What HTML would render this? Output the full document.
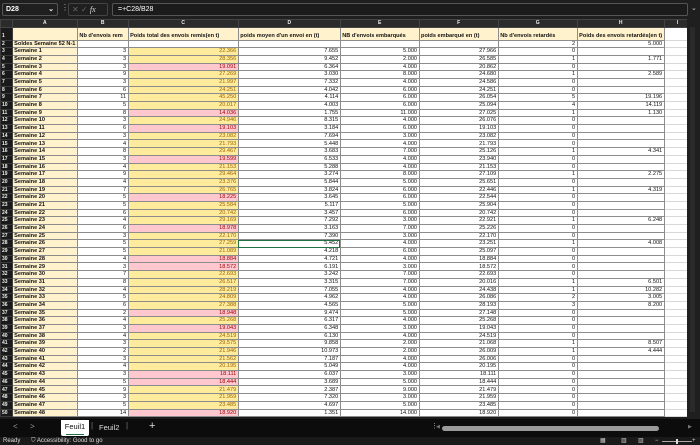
<!DOCTYPE html>
<html><head><meta charset="utf-8">
<style>
*{margin:0;padding:0;box-sizing:border-box}
body{width:700px;height:445px;overflow:hidden;background:#1c1c1c;font-family:"Liberation Sans",sans-serif;position:relative}
.fb{position:absolute;left:0;top:0;width:700px;height:19px;background:#1f1f1f}
.nb{position:absolute;left:2px;top:3px;width:56px;height:13px;border:1px solid #555;border-radius:2px;color:#fff;font-size:7px;line-height:11px;padding-left:3px;font-weight:bold}
.nb span{position:absolute;right:3px;top:0;font-size:7px}
.ic{position:absolute;left:68px;top:3px;width:40px;height:13px;border:1px solid #444;border-radius:2px;color:#666;font-size:8px;line-height:11px;padding-left:3px}
.fx{position:absolute;left:112px;top:3px;width:576px;height:13px;border:1px solid #555;border-radius:2px;color:#fff;font-size:7px;line-height:11px;padding-left:5px;background:#1b1b1b}
table{position:absolute;left:0;top:19px;border-collapse:collapse;table-layout:fixed;font-size:5.6px;color:#111}
td{height:7.7px;line-height:6.5px;padding:0 1.5px;white-space:nowrap;overflow:hidden;border:1px solid #8c8c8c;background:#fff;text-align:right}
tr.h td{height:7px;background:#2b2b2b;color:#eee;text-align:center;border:1px solid #444;font-weight:bold;font-size:5px}
td.n{background:#1a1a1a;color:#eee;border:1px solid #3a3a3a;text-align:left;font-weight:bold;font-size:5px;padding:0 1px}
td.a{background:#fff2cc;text-align:left;font-weight:bold}
td.y{background:#ffeb9c;color:#9c6500}
td.p{background:#ffc7ce;color:#9c0006}
td.e{border:1px solid #d8d8d8}
tr.r1 td{height:13px;vertical-align:bottom;text-align:left;font-weight:bold;background:#fff2cc}
tr.r1 td.n{background:#1a1a1a}
tr.r1 td.e{background:#fff}
.vs{position:absolute;left:687px;top:19px;width:13px;height:400px;background:#1f1f1f}
.tabs{position:absolute;left:0;top:419px;width:700px;height:18px;background:#0c0c0c;color:#ddd;font-size:8px}
.st{position:absolute;left:0;top:437px;width:700px;height:8px;background:#1a1a1a;color:#ddd;font-size:6px;line-height:8px}
</style></head><body>
<div class="fb">
<div class="nb">D28<span>⌄</span></div>
<div style="position:absolute;left:61px;top:3px;color:#aaa;font-size:8px">⋮</div>
<div class="ic">✕ ✓ <i style="color:#ddd;font-family:'Liberation Serif',serif">fx</i></div>
<div class="fx">=+C28/B28</div>
<div style="position:absolute;left:691px;top:4px;color:#ccc;font-size:7px">⌄</div>
</div>
<table>
<colgroup><col style="width:12px"><col style="width:57px"><col style="width:51px"><col style="width:112px"><col style="width:104px"><col style="width:80px"><col style="width:81px"><col style="width:81px"><col style="width:71px"><col style="width:29px"><col style="width:9px"></colgroup>
<tr class="h"><td></td><td>A</td><td>B</td><td>C</td><td>D</td><td>E</td><td>F</td><td>G</td><td>H</td><td>I</td><td></td></tr>
<tr class="r1"><td class="n">1</td><td></td><td>Nb d'envois rem</td><td>Poids total des envois remis(en t)</td><td>poids moyen d'un envoi en (t)</td><td>NB d'envois embarqués</td><td>poids embarqué en (t)</td><td>Nb d'envois retardés</td><td>Poids des envois retardés(en t)</td><td class="e"></td><td class="e"></td></tr>
<tr><td class="n">2</td><td class="a" style="overflow:visible">Soldes Semaine 52 N-1</td><td></td><td></td><td></td><td></td><td></td><td>2</td><td>5.000</td><td class="e"></td><td class="e"></td></tr>
<tr><td class="n">3</td><td class="a">Semaine 1</td><td>3</td><td class="y">22.366</td><td>7.655</td><td>5.000</td><td>27.966</td><td>0</td><td></td><td class="e"></td><td class="e"></td></tr>
<tr><td class="n">4</td><td class="a">Semaine 2</td><td>3</td><td class="y">28.356</td><td>9.452</td><td>2.000</td><td>26.585</td><td>1</td><td>1.771</td><td class="e"></td><td class="e"></td></tr>
<tr><td class="n">5</td><td class="a">Semaine 3</td><td>3</td><td class="p">19.091</td><td>6.364</td><td>4.000</td><td>20.862</td><td>0</td><td></td><td class="e"></td><td class="e"></td></tr>
<tr><td class="n">6</td><td class="a">Semaine 4</td><td>9</td><td class="y">27.269</td><td>3.030</td><td>8.000</td><td>24.680</td><td>1</td><td>2.589</td><td class="e"></td><td class="e"></td></tr>
<tr><td class="n">7</td><td class="a">Semaine 5</td><td>3</td><td class="y">21.997</td><td>7.332</td><td>4.000</td><td>24.586</td><td>0</td><td></td><td class="e"></td><td class="e"></td></tr>
<tr><td class="n">8</td><td class="a">Semaine 6</td><td>6</td><td class="y">24.251</td><td>4.042</td><td>6.000</td><td>24.251</td><td>0</td><td></td><td class="e"></td><td class="e"></td></tr>
<tr><td class="n">9</td><td class="a">Semaine 7</td><td>11</td><td class="y">45.250</td><td>4.114</td><td>6.000</td><td>26.054</td><td>5</td><td>19.196</td><td class="e"></td><td class="e"></td></tr>
<tr><td class="n">10</td><td class="a">Semaine 8</td><td>5</td><td class="y">20.017</td><td>4.003</td><td>6.000</td><td>25.094</td><td>4</td><td>14.119</td><td class="e"></td><td class="e"></td></tr>
<tr><td class="n">11</td><td class="a">Semaine 9</td><td>8</td><td class="p">14.036</td><td>1.755</td><td>11.000</td><td>27.025</td><td>1</td><td>1.130</td><td class="e"></td><td class="e"></td></tr>
<tr><td class="n">12</td><td class="a">Semaine 10</td><td>3</td><td class="y">24.946</td><td>8.315</td><td>4.000</td><td>26.076</td><td>0</td><td></td><td class="e"></td><td class="e"></td></tr>
<tr><td class="n">13</td><td class="a">Semaine 11</td><td>6</td><td class="p">19.103</td><td>3.184</td><td>6.000</td><td>19.103</td><td>0</td><td></td><td class="e"></td><td class="e"></td></tr>
<tr><td class="n">14</td><td class="a">Semaine 12</td><td>3</td><td class="y">23.082</td><td>7.694</td><td>3.000</td><td>23.082</td><td>0</td><td></td><td class="e"></td><td class="e"></td></tr>
<tr><td class="n">15</td><td class="a">Semaine 13</td><td>4</td><td class="y">21.793</td><td>5.448</td><td>4.000</td><td>21.793</td><td>0</td><td></td><td class="e"></td><td class="e"></td></tr>
<tr><td class="n">16</td><td class="a">Semaine 14</td><td>8</td><td class="y">29.467</td><td>3.683</td><td>7.000</td><td>25.126</td><td>1</td><td>4.341</td><td class="e"></td><td class="e"></td></tr>
<tr><td class="n">17</td><td class="a">Semaine 15</td><td>3</td><td class="p">19.599</td><td>6.533</td><td>4.000</td><td>23.940</td><td>0</td><td></td><td class="e"></td><td class="e"></td></tr>
<tr><td class="n">18</td><td class="a">Semaine 16</td><td>4</td><td class="y">21.153</td><td>5.288</td><td>4.000</td><td>21.153</td><td>0</td><td></td><td class="e"></td><td class="e"></td></tr>
<tr><td class="n">19</td><td class="a">Semaine 17</td><td>9</td><td class="y">29.464</td><td>3.274</td><td>8.000</td><td>27.109</td><td>1</td><td>2.275</td><td class="e"></td><td class="e"></td></tr>
<tr><td class="n">20</td><td class="a">Semaine 18</td><td>4</td><td class="y">23.376</td><td>5.844</td><td>5.000</td><td>25.651</td><td>0</td><td></td><td class="e"></td><td class="e"></td></tr>
<tr><td class="n">21</td><td class="a">Semaine 19</td><td>7</td><td class="y">26.765</td><td>3.824</td><td>6.000</td><td>22.446</td><td>1</td><td>4.319</td><td class="e"></td><td class="e"></td></tr>
<tr><td class="n">22</td><td class="a">Semaine 20</td><td>5</td><td class="p">18.225</td><td>3.645</td><td>6.000</td><td>22.544</td><td>0</td><td></td><td class="e"></td><td class="e"></td></tr>
<tr><td class="n">23</td><td class="a">Semaine 21</td><td>5</td><td class="y">25.584</td><td>5.117</td><td>5.000</td><td>25.904</td><td>0</td><td></td><td class="e"></td><td class="e"></td></tr>
<tr><td class="n">24</td><td class="a">Semaine 22</td><td>6</td><td class="y">20.742</td><td>3.457</td><td>6.000</td><td>20.742</td><td>0</td><td></td><td class="e"></td><td class="e"></td></tr>
<tr><td class="n">25</td><td class="a">Semaine 23</td><td>4</td><td class="y">29.169</td><td>7.292</td><td>3.000</td><td>22.921</td><td>1</td><td>6.248</td><td class="e"></td><td class="e"></td></tr>
<tr><td class="n">26</td><td class="a">Semaine 24</td><td>6</td><td class="p">18.978</td><td>3.163</td><td>7.000</td><td>25.226</td><td>0</td><td></td><td class="e"></td><td class="e"></td></tr>
<tr><td class="n">27</td><td class="a">Semaine 25</td><td>3</td><td class="y">22.170</td><td>7.390</td><td>3.000</td><td>22.170</td><td>0</td><td></td><td class="e"></td><td class="e"></td></tr>
<tr><td class="n">28</td><td class="a">Semaine 26</td><td>5</td><td class="y">27.259</td><td style="outline:1.5px solid #217346;outline-offset:-1px">5.452</td><td>4.000</td><td>23.251</td><td>1</td><td>4.008</td><td class="e"></td><td class="e"></td></tr>
<tr><td class="n">29</td><td class="a">Semaine 27</td><td>5</td><td class="y">21.089</td><td>4.218</td><td>6.000</td><td>25.097</td><td>0</td><td></td><td class="e"></td><td class="e"></td></tr>
<tr><td class="n">30</td><td class="a">Semaine 28</td><td>4</td><td class="p">18.884</td><td>4.721</td><td>4.000</td><td>18.884</td><td>0</td><td></td><td class="e"></td><td class="e"></td></tr>
<tr><td class="n">31</td><td class="a">Semaine 29</td><td>3</td><td class="p">18.572</td><td>6.191</td><td>3.000</td><td>18.572</td><td>0</td><td></td><td class="e"></td><td class="e"></td></tr>
<tr><td class="n">32</td><td class="a">Semaine 30</td><td>7</td><td class="y">22.693</td><td>3.242</td><td>7.000</td><td>22.693</td><td>0</td><td></td><td class="e"></td><td class="e"></td></tr>
<tr><td class="n">33</td><td class="a">Semaine 31</td><td>8</td><td class="y">26.517</td><td>3.315</td><td>7.000</td><td>20.016</td><td>1</td><td>6.501</td><td class="e"></td><td class="e"></td></tr>
<tr><td class="n">34</td><td class="a">Semaine 32</td><td>4</td><td class="y">28.219</td><td>7.055</td><td>4.000</td><td>24.438</td><td>1</td><td>10.282</td><td class="e"></td><td class="e"></td></tr>
<tr><td class="n">35</td><td class="a">Semaine 33</td><td>5</td><td class="y">24.809</td><td>4.962</td><td>4.000</td><td>26.086</td><td>2</td><td>3.005</td><td class="e"></td><td class="e"></td></tr>
<tr><td class="n">36</td><td class="a">Semaine 34</td><td>6</td><td class="y">27.388</td><td>4.565</td><td>5.000</td><td>28.193</td><td>3</td><td>8.200</td><td class="e"></td><td class="e"></td></tr>
<tr><td class="n">37</td><td class="a">Semaine 35</td><td>2</td><td class="p">18.948</td><td>9.474</td><td>5.000</td><td>27.148</td><td>0</td><td></td><td class="e"></td><td class="e"></td></tr>
<tr><td class="n">38</td><td class="a">Semaine 36</td><td>4</td><td class="y">25.268</td><td>6.317</td><td>4.000</td><td>25.268</td><td>0</td><td></td><td class="e"></td><td class="e"></td></tr>
<tr><td class="n">39</td><td class="a">Semaine 37</td><td>3</td><td class="p">19.043</td><td>6.348</td><td>3.000</td><td>19.043</td><td>0</td><td></td><td class="e"></td><td class="e"></td></tr>
<tr><td class="n">40</td><td class="a">Semaine 38</td><td>4</td><td class="y">24.519</td><td>6.130</td><td>4.000</td><td>24.519</td><td>0</td><td></td><td class="e"></td><td class="e"></td></tr>
<tr><td class="n">41</td><td class="a">Semaine 39</td><td>3</td><td class="y">29.575</td><td>9.858</td><td>2.000</td><td>21.068</td><td>1</td><td>8.507</td><td class="e"></td><td class="e"></td></tr>
<tr><td class="n">42</td><td class="a">Semaine 40</td><td>2</td><td class="y">21.946</td><td>10.973</td><td>2.000</td><td>26.009</td><td>1</td><td>4.444</td><td class="e"></td><td class="e"></td></tr>
<tr><td class="n">43</td><td class="a">Semaine 41</td><td>3</td><td class="y">21.562</td><td>7.187</td><td>4.000</td><td>26.006</td><td>0</td><td></td><td class="e"></td><td class="e"></td></tr>
<tr><td class="n">44</td><td class="a">Semaine 42</td><td>4</td><td class="y">20.195</td><td>5.049</td><td>4.000</td><td>20.195</td><td>0</td><td></td><td class="e"></td><td class="e"></td></tr>
<tr><td class="n">45</td><td class="a">Semaine 43</td><td>3</td><td class="p">18.111</td><td>6.037</td><td>3.000</td><td>18.111</td><td>0</td><td></td><td class="e"></td><td class="e"></td></tr>
<tr><td class="n">46</td><td class="a">Semaine 44</td><td>5</td><td class="p">18.444</td><td>3.689</td><td>5.000</td><td>18.444</td><td>0</td><td></td><td class="e"></td><td class="e"></td></tr>
<tr><td class="n">47</td><td class="a">Semaine 45</td><td>9</td><td class="y">21.479</td><td>2.387</td><td>9.000</td><td>21.479</td><td>0</td><td></td><td class="e"></td><td class="e"></td></tr>
<tr><td class="n">48</td><td class="a">Semaine 46</td><td>3</td><td class="y">21.959</td><td>7.320</td><td>3.000</td><td>21.959</td><td>0</td><td></td><td class="e"></td><td class="e"></td></tr>
<tr><td class="n">49</td><td class="a">Semaine 47</td><td>5</td><td class="y">23.485</td><td>4.697</td><td>5.000</td><td>23.485</td><td>0</td><td></td><td class="e"></td><td class="e"></td></tr>
<tr><td class="n">50</td><td class="a">Semaine 48</td><td>14</td><td class="p">18.920</td><td>1.351</td><td>14.000</td><td>18.920</td><td>0</td><td></td><td class="e"></td><td class="e"></td></tr>
</table>
<div class="vs"><div style="position:absolute;left:3px;top:8px;width:5px;height:385px;background:#2a2a2a"></div></div>
<div class="tabs">
<span style="position:absolute;left:13px;top:3px;color:#999">&lt;</span>
<span style="position:absolute;left:30px;top:3px;color:#999">&gt;</span>
<div style="position:absolute;left:61px;top:1px;width:28px;height:16px;background:#fff;color:#111;font-size:7.5px;line-height:14px;text-align:center;border-radius:0 0 2px 2px">Feuil1<div style="position:absolute;left:5px;right:5px;bottom:1px;height:1.5px;background:#217346"></div></div>
<span style="position:absolute;left:91px;top:2px;color:#777">|</span>
<span style="position:absolute;left:99px;top:4px;font-size:7.5px">Feuil2</span>
<span style="position:absolute;left:126px;top:2px;color:#777">|</span>
<span style="position:absolute;left:149px;top:1px;font-size:11px">+</span>
<span style="position:absolute;left:431px;top:3px;color:#aaa;font-size:7px">⋮</span>
<span style="position:absolute;left:436px;top:5px;color:#777;font-size:5px">◀</span>
<div style="position:absolute;left:442px;top:7px;width:217px;height:5px;background:#9a9a9a;border-radius:3px"></div>
<span style="position:absolute;left:688px;top:5px;color:#777;font-size:5px">▶</span>
</div>
<div class="st">
<span style="position:absolute;left:3px">Ready</span>
<span style="position:absolute;left:31px">⛉ Accessibility: Good to go</span>
<span style="position:absolute;left:600px;color:#ccc">▦</span>
<span style="position:absolute;left:621px;color:#ccc">▥</span>
<span style="position:absolute;left:638px;color:#ccc">▥</span>
<span style="position:absolute;left:655px;color:#ccc">−</span>
<div style="position:absolute;left:662px;top:4px;width:30px;height:1px;background:#aaa"></div>
<div style="position:absolute;left:676px;top:2px;width:2px;height:5px;background:#ddd"></div>
<span style="position:absolute;left:692px;color:#ccc">+</span>
</div>
</body></html>
